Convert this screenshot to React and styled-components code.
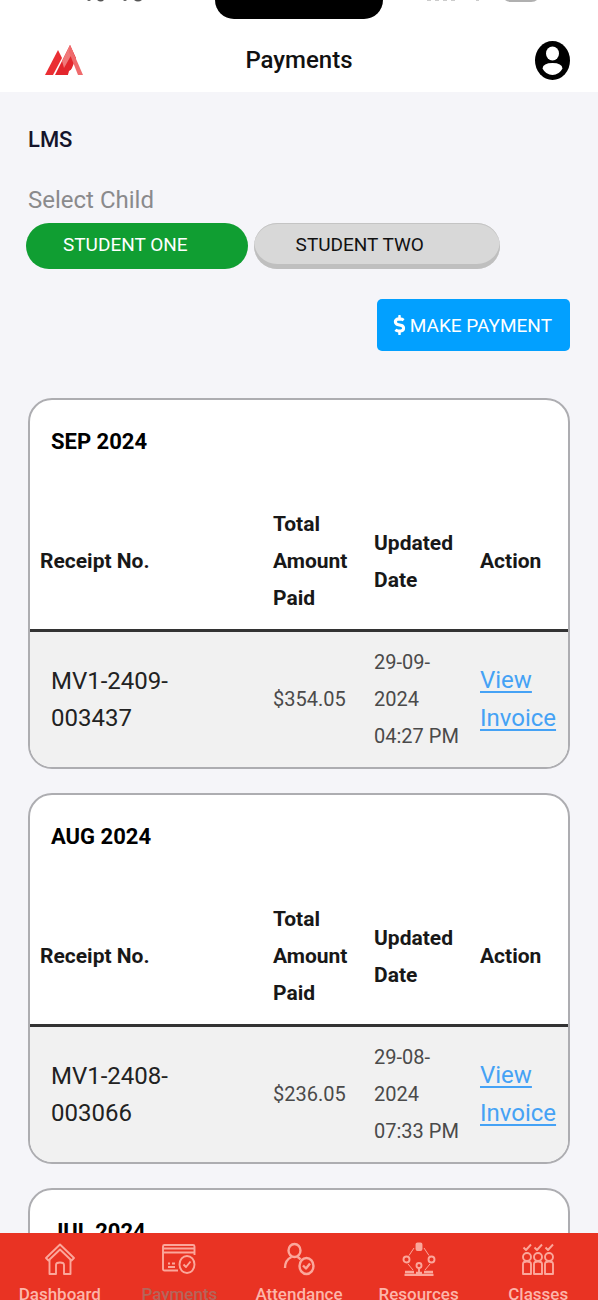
import React, { useState } from "react";
import styled, { createGlobalStyle } from "styled-components";
import { FaDollarSign } from "react-icons/fa";

const students = ["STUDENT ONE", "STUDENT TWO"];

const months = [
  {
    title: "SEP 2024",
    receipts: [{ no: "MV1-2409-003437", amount: "$354.05", date: "29-09-2024 04:27 PM" }],
  },
  {
    title: "AUG 2024",
    receipts: [{ no: "MV1-2408-003066", amount: "$236.05", date: "29-08-2024 07:33 PM" }],
  },
  {
    title: "JUL 2024",
    receipts: [],
  },
];

const HomeIcon = () => (
  <NavSvg viewBox="0 0 34 34">
    <path d="M5.5 18.5 L3 16 L17 2.5 L31 16 L28.5 18.5 L17 7.5 Z" />
    <path d="M6.5 17.5 V32 H13 V23 Q13 20.5 17 20.5 Q21 20.5 21 23 V32 H27.5 V17.5" />
  </NavSvg>
);

const PaymentsIcon = () => (
  <NavSvg viewBox="0 0 34 34">
    <path d="M16 28.5 H2.5 Q1 28.5 1 27 V4.5 Q1 3 2.500 3 H31 Q32.5 3 32.5 4.5 V13" />
    <path d="M1 6.5 H32.5 M1 10.5 H32.5 M6 21.5 H8 M10 21.5 H13 M6 25 H13" />
    <ellipse cx="25" cy="22.500" rx="7.5" ry="8.5" />
    <path d="M21.500 22.5 L24 25 L28.5 19.5" />
  </NavSvg>
);

const AttendanceIcon = () => (
  <NavSvg viewBox="0 0 34 34" $bold>
    <ellipse cx="12.5" cy="8.5" rx="6" ry="6.5" />
    <path d="M3 26 Q3 18 9.500 15 M15.5 15 Q17.500 16 18.5 17.5" />
    <ellipse cx="24.500" cy="24" rx="7" ry="8" />
    <path d="M21 23.5 L24 26.5 L28 21.5" />
  </NavSvg>
);

const ResourcesIcon = () => (
  <NavSvg viewBox="0 0 34 34">
    <rect x="14.5" y="1.5" width="5" height="6.5" rx="1" fill="currentColor" />
    <path d="M12 6 L7 13.5 M22 6 L27 13.5 M6 22 L11 28 M28 22 L23 28" strokeWidth="1" />
    <circle cx="4.5" cy="17.500" r="3" />
    <circle cx="29.500" cy="17.500" r="3" />
    <circle cx="17" cy="23.500" r="2.500" />
    <path d="M17 26 V30" />
    <path d="M3 30 H12 M14 31 H20 M22 30 H31 M2.500 33 H31.5" strokeWidth="2.600" />
  </NavSvg>
);

const ClassesIcon = () => (
  <NavSvg viewBox="0 0 34 34">
    {[6, 17, 28].map((x) => (
      <g key={x}>
        <path d={`M${x - 3.5} 5.500 L${x - 1} 8 L${x + 4} 2.500`} />
        <circle cx={x} cy="15" r="4" />
        <path d={`M${x - 4} 32 V22 Q${x - 4} 19.500 ${x} 19.500 Q${x + 4} 19.500 ${x + 4} 22 V32 Z`} />
      </g>
    ))}
  </NavSvg>
);

const navItems = [
  { label: "Dashboard", Icon: HomeIcon },
  { label: "Payments", Icon: PaymentsIcon },
  { label: "Attendance", Icon: AttendanceIcon },
  { label: "Resources", Icon: ResourcesIcon },
  { label: "Classes", Icon: ClassesIcon },
];

const App = () => {
  const [selected, setSelected] = useState(students[0]);
  const [tab, setTab] = useState("Payments");

  return (
    <Screen>
      <GlobalStyle />
      <StatusBar>
        <StatusSvg viewBox="0 0 60 4" aria-hidden="true">
          <path d="M3 0 Q5 2 7 0 Z M13 0 Q17 3 20 0 Z M39 0 Q41 2 43 0 Z M50 0 Q54 3 58 0 Z" fill="#555" />
        </StatusSvg>
        <Notch />
        <StatusSvg $wide viewBox="0 0 120 4" aria-hidden="true">
          <path d="M6 0 h4 v1 h-4 Z M14 0 h4 v1 h-4 Z M22 0 h4 v1 h-4 Z M30 0 h4 v1 h-4 Z M55 0 h3 v1 h-3 Z" fill="#ccc" />
          <path d="M84 0 H116 Q114 2 110 2 H90 Q86 2 84 0 Z" fill="#b0b0b0" />
        </StatusSvg>
      </StatusBar>

      <Header>
        <HomeLink href="#home" aria-label="Home">
          <svg width="40" height="32" viewBox="0 0 40 32">
            <path d="M1 31 L14 6 L18 14 L9 31 Z" fill="#ea2e33" />
            <path d="M11 31 L26 1 L32 14 L28 24 L24 31 Z" fill="#e3262d" />
            <path d="M18 17 L26 1 L29 8 L20 24 Z" fill="#f0797a" />
            <path d="M26 1 L39 31 H34 L25 8 Z" fill="#ef6a6c" />
            <path d="M25 27 L30 24 L32 31 H24 Z" fill="#fff" />
          </svg>
        </HomeLink>
        <HeaderTitle>Payments</HeaderTitle>
        <ProfileButton type="button" aria-label="Profile">
          <svg width="35" height="39" viewBox="0 0 35 39">
            <ellipse cx="17.5" cy="19.500" rx="17.5" ry="19.500" fill="#000" />
            <ellipse cx="17.5" cy="12.500" rx="6.500" ry="7" fill="#fff" />
            <path d="M7.5 27.500 Q8 22 17.5 22 Q27 22 27.500 27.500 Q24 34 17.5 34 Q11 34 7.500 27.500 Z" fill="#fff" />
          </svg>
        </ProfileButton>
      </Header>

      <Content>
        <SectionTitle>LMS</SectionTitle>
        <SelectLabel id="child-label">Select Child</SelectLabel>
        <StudentList role="group" aria-labelledby="child-label">
          {students.map((name) => (
            <StudentButton
              key={name}
              type="button"
              $active={selected === name}
              aria-pressed={selected === name}
              onClick={() => setSelected(name)}
            >
              {name}
            </StudentButton>
          ))}
        </StudentList>

        <Actions>
          <PayButton type="button">
            <FaDollarSign />
            MAKE PAYMENT
          </PayButton>
        </Actions>

        {months.map((month) => (
          <MonthCard key={month.title}>
            <MonthTitle>{month.title}</MonthTitle>
            <ReceiptTable>
              <thead>
                <tr>
                  <HeadCell>Receipt No.</HeadCell>
                  <HeadCell $width="101px">Total Amount Paid</HeadCell>
                  <HeadCell $width="106px">Updated Date</HeadCell>
                  <HeadCell $width="98px">Action</HeadCell>
                </tr>
              </thead>
              <tbody>
                {month.receipts.map((receipt) => (
                  <tr key={receipt.no}>
                    <ReceiptCell>{receipt.no}</ReceiptCell>
                    <Cell>{receipt.amount}</Cell>
                    <Cell>{receipt.date}</Cell>
                    <Cell>
                      <InvoiceLink href="#invoice">View Invoice</InvoiceLink>
                    </Cell>
                  </tr>
                ))}
              </tbody>
            </ReceiptTable>
          </MonthCard>
        ))}
      </Content>

      <BottomNav>
        {navItems.map(({ label, Icon }) => (
          <NavItem
            key={label}
            href={`#${label.toLowerCase()}`}
            onClick={() => setTab(label)}
          >
            <Icon />
            <NavLabel $active={tab === label}>{label}</NavLabel>
          </NavItem>
        ))}
      </BottomNav>
    </Screen>
  );
};

// Styled Components

const GlobalStyle = createGlobalStyle`
  * {
    box-sizing: border-box;
  }

  body {
    margin: 0;
    background: #f5f5f9;
    font-family: Roboto, "Liberation Sans", sans-serif;
  }

  button {
    font-family: inherit;
    cursor: pointer;
  }
`;

const Screen = styled.div`
  display: flex;
  flex-direction: column;
  height: 100vh;
  overflow: hidden;
`;

const StatusBar = styled.div`
  display: grid;
  grid-template-columns: 1fr auto 1fr;
  justify-items: center;
  flex-shrink: 0;
  height: 28px;
  background: #fff;
`;

const StatusSvg = styled.svg`
  width: ${({ $wide }) => ($wide ? "120px" : "60px")};
  height: 4px;
  margin-left: ${({ $wide }) => ($wide ? "-20px" : "12px")};
`;

const Notch = styled.div`
  width: 168px;
  height: 19px;
  background: #000;
  border-radius: 0 0 26px 26px;
`;

const Header = styled.header`
  display: grid;
  grid-template-columns: 1fr auto 1fr;
  align-items: center;
  flex-shrink: 0;
  height: 64px;
  padding: 0 28px 0 44px;
  background: #fff;
`;

const HomeLink = styled.a`
  display: flex;
  justify-self: start;
`;

const HeaderTitle = styled.h1`
  margin: 0 16px 0 0;
  color: #111;
  font-size: 24px;
  font-weight: 500;
  line-height: 32px;
`;

const ProfileButton = styled.button`
  display: flex;
  justify-self: end;
  padding: 0;
  border: none;
  background: none;
`;

const Content = styled.main`
  flex: 1;
  min-height: 0;
  padding: 32px 28px 0;
  overflow-y: auto;
  scrollbar-width: none;
`;

const SectionTitle = styled.h2`
  margin: 0 0 28px;
  color: #14142b;
  font-size: 22px;
  font-weight: 500;
  line-height: 32px;
`;

const SelectLabel = styled.p`
  margin: 0;
  color: #8a8a8c;
  font-size: 24px;
  line-height: 32px;
`;

const StudentList = styled.div`
  display: flex;
  gap: 6px;
  margin: 7px -2px 30px;
`;

const StudentButton = styled.button`
  height: 46px;
  padding: ${({ $active }) => ($active ? "0 60px 3px 37px" : "0 76px 3px 42px")};
  border: none;
  border-radius: 23px;
  background: ${({ $active }) => ($active ? "#109e32" : "#d8d8d8")};
  box-shadow: ${({ $active }) =>
    $active ? "none" : "inset 0 -5px 0 #bfbfbf, inset 0 1px 0 #c4c4c4"};
  color: ${({ $active }) => ($active ? "#fff" : "#111")};
  font-size: 19px;
  white-space: nowrap;
`;

const Actions = styled.div`
  display: flex;
  justify-content: flex-end;
  margin-bottom: 47px;
`;

const PayButton = styled.button`
  display: flex;
  align-items: center;
  gap: 4px;
  height: 52px;
  padding: 0 18px 0 16px;
  border: none;
  border-radius: 5px;
  background: #02a0ff;
  color: #fff;
  font-size: 19px;

  svg {
    width: 13px;
    height: 20px;
  }
`;

const MonthCard = styled.section`
  margin-bottom: 24px;
  border: 2px solid #adadb1;
  border-radius: 24px;
  background: #fff;
  overflow: hidden;
`;

const MonthTitle = styled.h3`
  margin: 0;
  padding: 23px 21px 34px;
  color: #000;
  font-size: 22px;
  font-weight: 700;
  line-height: 37px;
`;

const ReceiptTable = styled.table`
  width: 100%;
  table-layout: fixed;
  border-spacing: 0;
  line-height: 37px;
`;

const HeadCell = styled.th`
  width: ${({ $width }) => $width || "auto"};
  padding: 12px 10px;
  border-bottom: 3px solid #333;
  color: #181818;
  font-size: 21px;
  font-weight: 700;
  text-align: left;
`;

const Cell = styled.td`
  padding: 12px 0 12px 10px;
  background: #f1f1f1;
  color: #4a4a4a;
  font-size: 20px;
`;

const ReceiptCell = styled(Cell)`
  padding: 12px 80px 12px 21px;
  color: #222;
  font-size: 24px;
`;

const InvoiceLink = styled.a`
  color: #45a2f5;
  font-size: 24px;
  text-underline-offset: 3px;
`;

const BottomNav = styled.nav`
  display: grid;
  grid-template-columns: repeat(5, 1fr);
  flex-shrink: 0;
  height: 67px;
  background: #e93323;
  overflow: hidden;
`;

const NavItem = styled.a`
  display: flex;
  flex-direction: column;
  align-items: center;
  gap: 7px;
  padding-top: 9px;
  color: #fba79b;
  text-decoration: none;
`;

const NavSvg = styled.svg`
  flex-shrink: 0;
  width: 34px;
  height: 34px;
  fill: none;
  stroke: currentColor;
  stroke-width: ${({ $bold }) => ($bold ? 2.4 : 1.9)};
  stroke-linejoin: round;
`;

const NavLabel = styled.span`
  color: ${({ $active }) => ($active ? "#b5655a" : "#fcb5aa")};
  font-size: 17px;
  font-weight: 500;
  line-height: 22px;
`;

export default App;
